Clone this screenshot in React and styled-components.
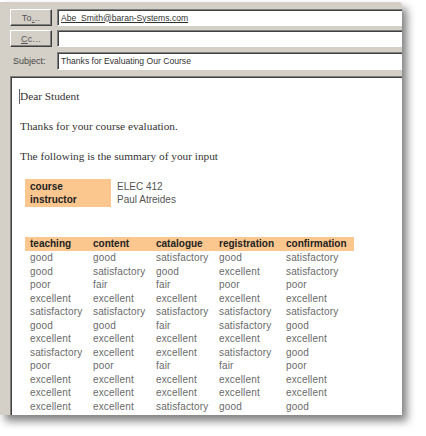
import styled, { createGlobalStyle } from "styled-components";

const GlobalStyle = createGlobalStyle`
  html, body {
    margin: 0;
    padding: 0;
    background: #ffffff;
  }
`;

const Page = styled.div`
  padding: 2px 0 0 0;
  width: 426px;
  height: 434px;
  overflow: hidden;
`;

const Window = styled.div`
  width: 402px;
  height: 413px;
  background: #d4d0c8;
  border-top-right-radius: 3px;
  box-shadow: 5px 6px 9px rgba(0, 0, 0, 0.5);
  padding: 7px 0 0 10px;
  box-sizing: border-box;
  display: flex;
  flex-direction: column;
`;

const HeaderRow = styled.div`
  display: flex;
  align-items: stretch;
  gap: 5px;
  height: ${(p) => p.$h}px;
  margin-bottom: ${(p) => p.$mb}px;
`;

const AddrButton = styled.div`
  width: 42px;
  box-sizing: border-box;
  border-top: 1px solid #ffffff;
  border-left: 1px solid #ffffff;
  border-right: 1px solid #404040;
  border-bottom: 1px solid #404040;
  box-shadow: inset -1px -1px 0 #808080;
  display: flex;
  align-items: center;
  justify-content: center;
  font-family: "Liberation Sans", Arial, sans-serif;
  font-size: 9px;
  color: #555;
  letter-spacing: 0.3px;
`;

const FieldLabel = styled.div`
  width: 42px;
  display: flex;
  align-items: center;
  padding-left: 3px;
  box-sizing: border-box;
  font-family: "Liberation Sans", Arial, sans-serif;
  font-size: 9px;
  color: #444;
`;

const Field = styled.div`
  flex: 1;
  background: #ffffff;
  box-sizing: border-box;
  border-top: 1px solid #808080;
  border-left: 1px solid #808080;
  border-bottom: 1px solid #ffffff;
  box-shadow: inset 1px 1px 0 #404040;
  display: flex;
  align-items: center;
  padding-left: 3px;
  font-family: "Liberation Sans", Arial, sans-serif;
  font-size: 8.6px;
  color: #333;
`;

const Link = styled.span`
  text-decoration: underline;
`;

const Body = styled.div`
  flex: 1;
  background: #ffffff;
  box-sizing: border-box;
  border-top: 1px solid #808080;
  border-left: 1px solid #808080;
  box-shadow: inset 1px 1px 0 #404040;
  padding: 12px 0 0 9px;
  color: #333;
`;

const Para = styled.p`
  margin: 0 0 15px 0;
  font-family: "Liberation Serif", "Times New Roman", serif;
  font-size: 11.3px;
  line-height: 15px;
  display: flex;
  align-items: center;
`;

const Caret = styled.span`
  display: inline-block;
  width: 1px;
  height: 15px;
  background: #666;
  margin-left: -1px;
`;

const InfoTable = styled.div`
  display: grid;
  grid-template-columns: 86px auto;
  margin: 13px 0 0 5px;
  font-family: "Liberation Sans", Arial, sans-serif;
  font-size: 10px;
  line-height: 13.5px;
`;

const InfoLabels = styled.div`
  background: #fbc78f;
  padding: 0.5px 5px;
  font-weight: bold;
  color: #222;
`;

const InfoValues = styled.div`
  padding: 0.5px 6px;
  color: #555;
`;

const Grid = styled.div`
  display: grid;
  grid-template-columns: 63px 63px 63px 67px 73px;
  margin: 30px 0 0 5px;
  font-family: "Liberation Sans", Arial, sans-serif;
  font-size: 10px;
`;

const HeadCell = styled.div`
  background: #fbc78f;
  font-weight: bold;
  color: #222;
  height: 14px;
  line-height: 14px;
  padding-left: 5px;
`;

const Cell = styled.div`
  color: #6a6a6a;
  line-height: 13.5px;
  padding-left: 5px;
  letter-spacing: 0.15px;
`;

const headers = ["teaching", "content", "catalogue", "registration", "confirmation"];

const rows = [
  ["good", "good", "satisfactory", "good", "satisfactory"],
  ["good", "satisfactory", "good", "excellent", "satisfactory"],
  ["poor", "fair", "fair", "poor", "poor"],
  ["excellent", "excellent", "excellent", "excellent", "excellent"],
  ["satisfactory", "satisfactory", "satisfactory", "satisfactory", "satisfactory"],
  ["good", "good", "fair", "satisfactory", "good"],
  ["excellent", "excellent", "excellent", "excellent", "excellent"],
  ["satisfactory", "excellent", "excellent", "satisfactory", "good"],
  ["poor", "poor", "fair", "fair", "poor"],
  ["excellent", "excellent", "excellent", "excellent", "excellent"],
  ["excellent", "excellent", "excellent", "excellent", "excellent"],
  ["excellent", "excellent", "satisfactory", "good", "good"],
];

export default function App() {
  return (
    <>
      <GlobalStyle />
      <Page>
        <Window>
          <HeaderRow $h={17} $mb={4}>
            <AddrButton>
              To<Link>.</Link>..
            </AddrButton>
            <Field>
              <Link>Abe_Smith@baran-Systems.com</Link>
            </Field>
          </HeaderRow>
          <HeaderRow $h={17} $mb={5}>
            <AddrButton>
              <Link>C</Link>c...
            </AddrButton>
            <Field />
          </HeaderRow>
          <HeaderRow $h={18} $mb={6}>
            <FieldLabel>Subject:</FieldLabel>
            <Field>Thanks for Evaluating Our Course</Field>
          </HeaderRow>
          <Body>
            <Para>
              <Caret />
              Dear Student
            </Para>
            <Para>Thanks for your course evaluation.</Para>
            <Para>The following is the summary of your input</Para>
            <InfoTable>
              <InfoLabels>
                course
                <br />
                instructor
              </InfoLabels>
              <InfoValues>
                ELEC 412
                <br />
                Paul Atreides
              </InfoValues>
            </InfoTable>
            <Grid>
              {headers.map((h) => (
                <HeadCell key={h}>{h}</HeadCell>
              ))}
              {rows.map((r, i) =>
                r.map((v, j) => <Cell key={i + "-" + j}>{v}</Cell>)
              )}
            </Grid>
          </Body>
        </Window>
      </Page>
    </>
  );
}
